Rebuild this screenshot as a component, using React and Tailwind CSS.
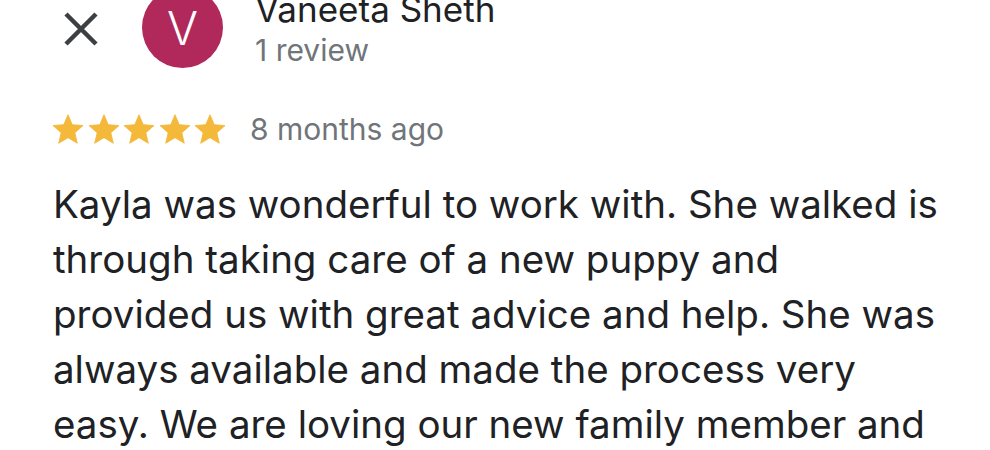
import React from "react";

const STAR = "M12 17.27L18.18 21l-1.64-7.03L22 9.24l-7.19-.61L12 2 9.19 8.63 2 9.24l5.46 4.73L5.82 21z";

const Star = () => (
  <svg width="30" height="30" viewBox="2 1.5 20 20" className="shrink-0">
    <path d={STAR} fill="#f4b93a" stroke="#f4b93a" strokeWidth="0.6" strokeLinejoin="round" />
  </svg>
);

const App = () => {
  return (
    <div className="w-[990px] h-[450px] bg-white overflow-hidden font-['Inter',sans-serif]">
      {/* Reviewer header */}
      <div className="flex items-start -mt-[13px] pl-[63px]">
        <svg width="36" height="36" viewBox="0 0 36 36" className="mt-[24px] shrink-0">
          <path d="M3 3L33 33M33 3L3 33" stroke="#3c4043" strokeWidth="4.5" />
        </svg>
        <div className="ml-[43px] w-[81px] h-[81px] rounded-full bg-[#b0295a] flex items-center justify-center shrink-0">
          <span className="text-white text-[46px] font-light leading-none">V</span>
        </div>
        <div className="ml-[32px] flex flex-col">
          <span className="text-[35px] leading-[44px] text-[#202124]">Vaneeta Sheth</span>
          <span className="text-[30px] leading-[38px] text-[#70757a]">1 review</span>
        </div>
      </div>

      {/* Rating */}
      <div className="flex items-center pl-[53px] mt-[42px] h-[36px]">
        <div className="flex gap-[5.5px]">
          <Star />
          <Star />
          <Star />
          <Star />
          <Star />
        </div>
        <span className="ml-[25px] text-[30px] leading-[36px] text-[#70757a]">8 months ago</span>
      </div>

      {/* Review text */}
      <p className="pl-[53px] mt-[30px] text-[38.5px] leading-[55px] text-[#202124] whitespace-nowrap">
        Kayla was wonderful to work with. She walked is
        <br />
        through taking care of a new puppy and
        <br />
        provided us with great advice and help. She was
        <br />
        always available and made the process very
        <br />
        easy. We are loving our new family member and
      </p>
    </div>
  );
};

export default App;
